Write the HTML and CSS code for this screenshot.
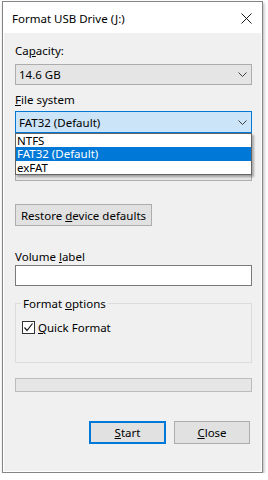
FILE: index.html
```html
<!DOCTYPE html>
<html lang="en">
<head>
    <meta charset="UTF-8">
    <meta name="viewport" content="width=device-width, initial-scale=1.0">
    <title>Format USB Drive (J:)</title>
    <link rel="stylesheet" href="styles.css">
</head>
<body>
    <div class="window">
        <div class="titlebar">
            <span class="title">Format USB Drive (J:)</span>
            <svg class="close" width="11" height="11" viewBox="0 0 11 11">
                <path d="M0.5 0.5L10.5 10.5M10.5 0.5L0.5 10.5" />
            </svg>
        </div>

        <div class="content">
            <div class="label label-capacity">Ca<u>p</u>acity:</div>
            <div class="combo">
                <span>14.6 GB</span>
                <svg class="chevron" width="9" height="5" viewBox="0 0 9 5"><path d="M0.5 0.5L4.5 4.5L8.5 0.5" /></svg>
            </div>

            <div class="label label-fs"><u>F</u>ile system</div>
            <div class="dropdown">
                <div class="combo focused">
                    <span>FAT32 (Default)</span>
                    <svg class="chevron" width="9" height="5" viewBox="0 0 9 5"><path d="M0.5 0.5L4.5 4.5L8.5 0.5" /></svg>
                </div>
                <ul class="list">
                    <li>NTFS</li>
                    <li class="selected">FAT32 (Default)</li>
                    <li>exFAT</li>
                </ul>
            </div>

            <!-- allocation unit row sits under the open list -->
            <div class="label label-alloc covered"><u>A</u>llocation unit size</div>
            <div class="combo">
                <span class="covered">32 kilobytes</span>
                <svg class="chevron" width="9" height="5" viewBox="0 0 9 5"><path d="M0.5 0.5L4.5 4.5L8.5 0.5" /></svg>
            </div>

            <button class="btn btn-restore">Restore <u>d</u>evice defaults</button>

            <div class="label label-volume">Volume <u>l</u>abel</div>
            <div class="textbox"></div>

            <fieldset class="group">
                <legend>Format <u>o</u>ptions</legend>
                <div class="check">
                    <span class="checkbox">
                        <svg width="11" height="11" viewBox="0 0 11 11"><path d="M1.5 5.5L4 8.5L9.5 1.5" /></svg>
                    </span>
                    <span><u>Q</u>uick Format</span>
                </div>
            </fieldset>

            <div class="progress"></div>

            <div class="actions">
                <button class="btn btn-default"><u>S</u>tart</button>
                <button class="btn"><u>C</u>lose</button>
            </div>
        </div>
    </div>
</body>
</html>
```

FILE: styles.css
```css
body {
    margin: 0;
    background: #ffffff;
    font-family: 'Noto Sans', 'Open Sans', sans-serif;
    font-size: 11.5px;
    color: #000000;
}

.window {
    width: 261px;
    height: 472px;
    margin: 1px 0 0 2px;
    padding: 1px;
    box-sizing: border-box;
    background: #ffffff;
    border: 1px solid #858585;
    box-shadow: 1px 2px 3px rgba(0, 0, 0, 0.3);
    display: flex;
    flex-direction: column;
}

.titlebar {
    height: 30px;
    display: flex;
    align-items: center;
    justify-content: space-between;
    padding: 0 9px 0 8px;
    background: #ffffff;
}

.close path {
    stroke: #1a1a1a;
    stroke-width: 1;
    fill: none;
}

.content {
    flex: 1;
    background: #f0f0f0;
    padding: 0 9px 0 11px;
    display: flex;
    flex-direction: column;
    align-items: stretch;
}

.label {
    line-height: 15px;
    height: 15px;
}

.label-capacity { margin-top: 10px; margin-bottom: 6px; }
.label-fs { margin-top: 7px; margin-bottom: 4px; }
.label-alloc { margin-top: 7px; margin-bottom: 5px; }
.label-volume { margin-top: 23px; margin-bottom: 1px; }

.covered {
    visibility: hidden;
}

.combo {
    height: 21px;
    box-sizing: border-box;
    border: 1px solid #adadad;
    background: #e5e5e5;
    display: flex;
    align-items: center;
    justify-content: space-between;
    padding: 0 4px 0 3px;
    line-height: 15px;
}

.combo.focused {
    height: 22px;
    border-color: #0078d7;
    background: #cce4f7;
}

.chevron path {
    stroke: #404040;
    stroke-width: 1;
    fill: none;
}

.dropdown {
    position: relative;
}

.list {
    position: absolute;
    top: 100%;
    left: 0;
    right: 0;
    margin: 0;
    padding: 0;
    list-style: none;
    background: #ffffff;
    border: 1px solid #646464;
    box-shadow: 2px 2px 2px rgba(0, 0, 0, 0.3);
    z-index: 2;
}

.list li {
    height: 13px;
    line-height: 13px;
    padding-left: 1px;
}

.list li.selected {
    height: 14px;
    line-height: 14px;
    background: #0078d7;
    color: #ffffff;
}

.btn {
    font-family: inherit;
    font-size: 11.5px;
    color: #000000;
    height: 23px;
    padding: 0;
    box-sizing: border-box;
    border: 1px solid #adadad;
    background: #e1e1e1;
    line-height: 15px;
}

.btn-restore {
    align-self: flex-start;
    width: 137px;
    height: 22px;
    margin-top: 23px;
}

.textbox {
    height: 21px;
    box-sizing: border-box;
    border: 1px solid #7a7a7a;
    background: #ffffff;
}

.group {
    margin: 10px 0 0 0;
    padding: 0 6px 0 5px;
    height: 67px;
    box-sizing: border-box;
    border: 1px solid #dcdcdc;
}

.group legend {
    padding: 0 2px;
    line-height: 15px;
}

.check {
    display: flex;
    align-items: center;
    gap: 3px;
    margin-top: 9px;
    margin-left: 1px;
    line-height: 15px;
}

.checkbox {
    width: 13px;
    height: 13px;
    box-sizing: border-box;
    border: 1px solid #333333;
    background: #ffffff;
    display: flex;
    align-items: center;
    justify-content: center;
}

.checkbox path {
    stroke: #1a1a1a;
    stroke-width: 1.2;
    fill: none;
}

.progress {
    height: 14px;
    margin-top: 15px;
    box-sizing: border-box;
    border: 1px solid #bcbcbc;
    background: #e6e6e6;
}

.actions {
    display: flex;
    justify-content: flex-end;
    gap: 8px;
    margin-top: 29px;
    padding-right: 2px;
}

.actions .btn {
    width: 76px;
}

.actions .btn-default {
    width: 77px;
    border-color: #0078d7;
    box-shadow: inset 0 0 0 1px #0078d7;
}
```
